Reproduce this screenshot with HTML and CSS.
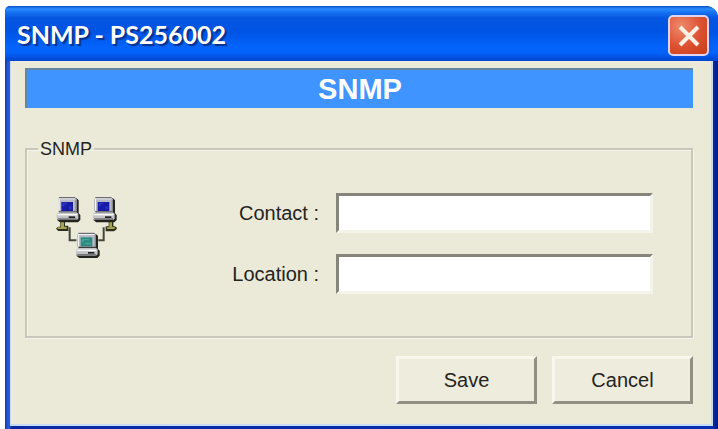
FILE: index.html
```html
<!DOCTYPE html>
<html lang="en">
<head>
<meta charset="utf-8">
<meta name="viewport" content="width=device-width, initial-scale=1">
<title>SNMP - PS256002</title>
<link rel="stylesheet" href="styles.css">
</head>
<body>
<main class="window">
  <header class="titlebar">
    <h1 class="title">SNMP - PS256002</h1>
    <button class="close" type="button" aria-label="Close">
      <svg viewBox="0 0 24 24" width="24" height="24" aria-hidden="true"><path d="M3 3L21 21M21 3L3 21" stroke="#fff0e4" stroke-width="4" fill="none"/></svg>
    </button>
  </header>
  <form class="content">
    <h2 class="banner">SNMP</h2>
    <fieldset class="group">
      <legend>SNMP</legend>
      <div class="group-body">
        <svg class="network" viewBox="45 45 186 189" width="62" height="63" aria-hidden="true">
          <defs>
            <g id="computer">
              <path d="M10 4H62L68 10V49L73 54V69L66 76H12L4 70V53L11 46L6 40V8Z" fill="#24241f"/>
              <path d="M9 3H58L62 7V43H6V7Z" fill="#b9bcc6"/>
              <path d="M9 4H57V7H11V41H7V7Z" fill="#f4f5f8"/>
              <path d="M58 8H62V44H12V41H58Z" fill="#85868c"/>
              <path d="M2 51L8 46H62L67 50V65L62 69H6L2 65Z" fill="#c4c5c8"/>
              <path d="M4 51H63V55H4Z" fill="#fafafa"/>
              <path d="M5 64H62V69H7Z" fill="#77777a"/>
              <path d="M38 58H57V63H38Z" fill="#202020"/>
              <path d="M9 2H58" stroke="#55555c" stroke-width="3"/>
            </g>
          </defs>
          <path d="M86 139V178H106M188 139V178H172" fill="none" stroke="#45453a" stroke-width="6"/>
          <path d="M58 122H72V134H82V150H52L45 143L51 137H58ZM203 122H217V134L227 139V145L219 151H194V136H203Z" fill="#2f301c"/>
          <path d="M60 122H69V137H77V144H50V139H60ZM205 122H213V137H221V144H198V139H205Z" fill="#a7a451"/>
          <use href="#computer" x="45" y="48"/>
          <path d="M61 63H96V90H61Z" fill="#171ba6"/><path d="M66 65H78V70H70V76H64V68ZM85 76H91V85H85Z" fill="#2c36c6"/>
          <use href="#computer" x="154" y="48"/>
          <path d="M170 63H205V90H170Z" fill="#171ba6"/><path d="M175 65H187V70H179V76H173V68ZM194 76H200V85H194Z" fill="#2c36c6"/>
          <use href="#computer" x="103" y="155"/>
          <path d="M119 169H154V196H119Z" fill="#2b8a80"/><path d="M124 174H144V178H128V184H122V177ZM132 185H150V190H132Z" fill="#4aa497"/>
        </svg>
        <div class="fields">
          <label for="contact">Contact :</label>
          <input id="contact" type="text">
          <label for="location">Location :</label>
          <input id="location" type="text">
        </div>
      </div>
    </fieldset>
    <div class="actions">
      <button class="button" type="button">Save</button>
      <button class="button" type="button">Cancel</button>
    </div>
  </form>
</main>
</body>
</html>
```
FILE: styles.css
```css
* {
  box-sizing: border-box;
}

body {
  margin: 0;
  padding: 6px 0 0 5px;
  background: #fff;
  color: #24241e;
  font-family: "Liberation Sans", Arial, sans-serif;
  font-size: 20px;
  line-height: 20px;
}

.window {
  display: flex;
  flex-direction: column;
  min-height: calc(100vh - 6px);
  padding: 0 5px 4px 5px;
  border-radius: 5px 12px 0 0;
  background: linear-gradient(90deg, #1238a8 0, #2858d8 3px, #2858d8 5px, #0a2ca0 6px, #0630b0 calc(100% - 6px), #001a80 100%);
}

.titlebar {
  display: flex;
  align-items: center;
  justify-content: space-between;
  height: 55px;
  margin: 0 -5px;
  padding: 0 9px 0 12px;
  border-radius: 5px 12px 0 0;
  background: linear-gradient(#0a50c8 0, #2a8cff 3px, #1874f4 6px, #0556e0 12px, #0054e4 26px, #0363fb 40px, #0362fa 47px, #0044cc 55px);
}

.title {
  margin: 0;
  color: #fff;
  font-family: "Trebuchet MS", Lato, sans-serif;
  font-size: 25px;
  font-weight: 700;
  line-height: 30px;
  text-shadow: 2px 2px 1px #08318c;
}

.close {
  display: grid;
  place-items: center;
  width: 41px;
  height: 41px;
  margin-top: 4px;
  padding: 0;
  border: 2px solid #dfd5f0;
  border-radius: 5px;
  background: radial-gradient(circle at 30% 25%, #ee8a6c, #dc5030 55%, #c63c18);
}

.content {
  flex: 1;
  padding: 7px 18px 20px 14px;
  border: solid #c8dcf8;
  border-width: 0 2px 2px 1px;
  background: #ebe9d8;
}

.banner {
  margin: 0;
  border: solid #6685a0;
  border-width: 2px 0 0 2px;
  background: #4094ff;
  color: #fff;
  font-size: 29px;
  font-weight: 700;
  line-height: 38px;
  text-align: center;
}

.group {
  min-width: 0;
  margin: 31px 0 0;
  padding: 0 38px 42px 29px;
  border: 2px solid #c9c7b9;
  box-shadow: inset 1px 1px #f6f5eb, 1px 1px #f6f5eb;
}

.group legend {
  margin-left: -18px;
  padding: 0 2px;
  font-size: 18px;
}

.group-body {
  display: flex;
  align-items: flex-start;
  justify-content: space-between;
  gap: 20px;
  padding-top: 34px;
}

.network {
  flex: none;
  margin-top: 3px;
}

.fields {
  display: grid;
  grid-template-columns: auto minmax(0, 317px);
  align-items: center;
  gap: 21px 17px;
}

.fields label {
  text-align: right;
}

.fields input {
  width: 100%;
  height: 40px;
  padding: 0 8px;
  border: solid;
  border-width: 3px;
  border-color: #85857b #f5f4ea #f5f4ea #85857b;
  border-radius: 0;
  background: #fff;
  color: inherit;
  font: inherit;
}

.actions {
  display: flex;
  justify-content: flex-end;
  gap: 15px;
  margin-top: 18px;
}

.button {
  width: 141px;
  height: 48px;
  padding: 0;
  border: 3px solid;
  border-color: #f8f7ee #908f81 #908f81 #f8f7ee;
  background: #eeecdd;
  color: inherit;
  font: inherit;
}
```
